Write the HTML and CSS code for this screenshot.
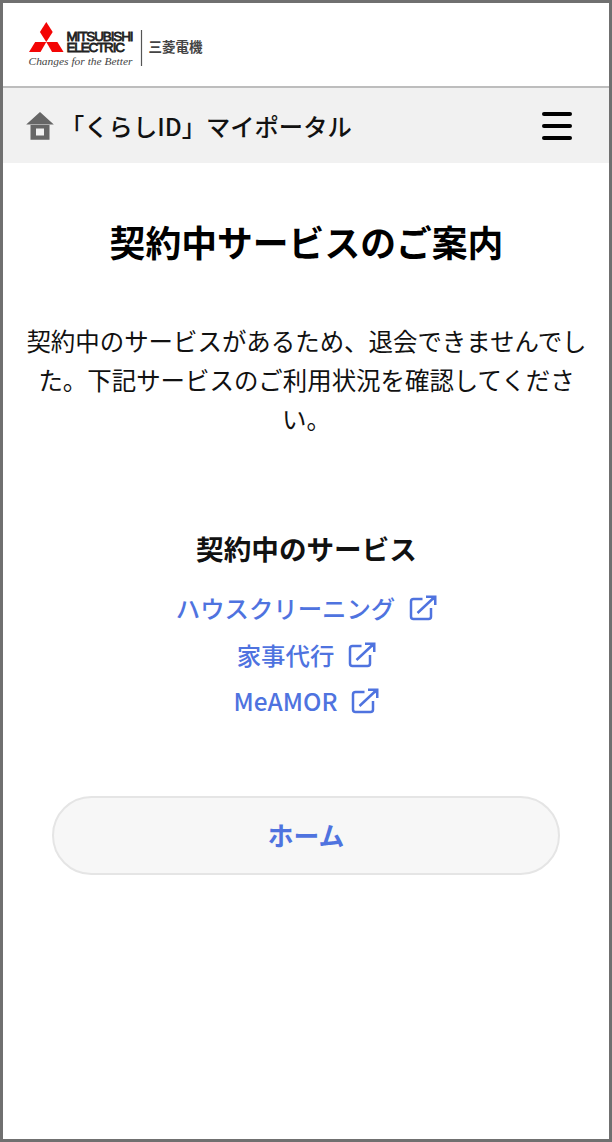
FILE: index.html
```html
<!DOCTYPE html>
<html lang="ja">
<head>
  <meta charset="UTF-8">
  <meta name="viewport" content="width=device-width, initial-scale=1.0">
  <title>契約中サービスのご案内</title>
  <link rel="stylesheet" href="styles.css">
</head>
<body>

  <header class="site-header">
    <a href="#" class="brand">
      <svg class="brand-logo" viewBox="0 0 176 48" role="img" aria-label="MITSUBISHI ELECTRIC 三菱電機">
        <g fill="#f30505">
          <path d="M18.300 1l6.400 10-6.400 10-6.400-10z"/>
          <path d="M7.200 21h11.100L12.500 31H1z"/>
          <path d="M18.300 21h11.100l6.200 10H24.100z"/>
        </g>
        <g class="brand-name">
          <text x="38.500" y="20" textLength="67" lengthAdjust="spacing">MITSUBISHI</text>
          <text x="38.500" y="31.300" textLength="58.500" lengthAdjust="spacing">ELECTRIC</text>
        </g>
        <text class="brand-slogan" x="0.500" y="43.500" textLength="104" lengthAdjust="spacingAndGlyphs">Changes for the Better</text>
        <path d="M113.500 9v36" stroke="#555" stroke-width="1.200"/>
        <text class="brand-jp" x="120.500" y="30.500" textLength="54" lengthAdjust="spacingAndGlyphs">三菱電機</text>
      </svg>
    </a>
  </header>

  <nav class="portal-bar">
    <a href="#" class="portal-home">
      <svg class="home-icon" viewBox="0 0 28 28" aria-hidden="true">
        <path fill="#666" fill-rule="evenodd" d="M14 0l13.800 12.500H.2zM4.500 12h19v15.800h-19zM10 16.500v7h8v-7z"/>
      </svg>
      <span>「くらしID」マイポータル</span>
    </a>
    <button class="menu-button" aria-label="メニュー">
      <span></span>
      <span></span>
      <span></span>
    </button>
  </nav>

  <main class="content">
    <h1>契約中サービスのご案内</h1>
    <p class="lead">契約中のサービスがあるため、退会できませんでした。下記サービスのご利用状況を確認してください。</p>

    <h2>契約中のサービス</h2>
    <ul class="service-list">
      <li>
        <a href="#">ハウスクリーニング
          <svg class="external-icon" viewBox="0 0 28 26" aria-hidden="true">
            <path d="M13.500 4H4.500Q2 4 2 6.500v15Q2 24 4.500 24h15Q22 24 22 21.500V13M8.500 18L24 3.500"/>
            <path class="arrow-head" d="M17 .5h10.500V10H25V5.500L22 3H17z"/>
          </svg>
        </a>
      </li>
      <li>
        <a href="#">家事代行
          <svg class="external-icon" viewBox="0 0 28 26" aria-hidden="true">
            <path d="M13.500 4H4.500Q2 4 2 6.500v15Q2 24 4.500 24h15Q22 24 22 21.500V13M8.500 18L24 3.500"/>
            <path class="arrow-head" d="M17 .5h10.500V10H25V5.500L22 3H17z"/>
          </svg>
        </a>
      </li>
      <li>
        <a href="#">MeAMOR
          <svg class="external-icon" viewBox="0 0 28 26" aria-hidden="true">
            <path d="M13.500 4H4.500Q2 4 2 6.500v15Q2 24 4.500 24h15Q22 24 22 21.500V13M8.500 18L24 3.500"/>
            <path class="arrow-head" d="M17 .5h10.500V10H25V5.500L22 3H17z"/>
          </svg>
        </a>
      </li>
    </ul>

    <a href="#" class="home-button">ホーム</a>
  </main>

</body>
</html>
```
FILE: styles.css
```css
:root {
  --link: #4f73df;
  --text: #111;
  --frame: #707070;
}

* {
  box-sizing: border-box;
}

body {
  margin: 0;
  min-height: 1142px;
  border: 3px solid var(--frame);
  background-color: #fff;
  color: var(--text);
  font-family: "Noto Sans CJK JP", sans-serif;
  font-size: 24.4px;
}

a {
  color: inherit;
  text-decoration: none;
}

/* Header */
.site-header {
  height: 85px;
  padding: 18px 25px 0;
  border-bottom: 2px solid #bdbdbd;
}

.brand-logo {
  display: block;
  width: 176px;
  height: 48px;
}

.brand-name {
  font-family: "Liberation Sans", sans-serif;
  font-size: 13.5px;
  fill: #222;
  stroke: #222;
  stroke-width: 0.8px;
}

.brand-slogan {
  font-family: "Liberation Serif", serif;
  font-size: 11px;
  font-style: italic;
  fill: #444;
}

.brand-jp {
  font-size: 13.5px;
  font-weight: 700;
  fill: #444;
}

/* Portal bar */
.portal-bar {
  display: flex;
  align-items: center;
  justify-content: space-between;
  height: 75px;
  padding: 0 37px 0 23px;
  background-color: #f1f1f1;
}

.portal-home {
  display: flex;
  align-items: center;
  font-size: 24.3px;
  font-weight: 500;
  line-height: 36px;
}

.home-icon {
  width: 28px;
  height: 28px;
  margin-right: 6px;
}

.menu-button {
  display: flex;
  flex-direction: column;
  justify-content: space-between;
  width: 30px;
  height: 28px;
  padding: 0;
  border: none;
  background: none;
}

.menu-button span {
  height: 4px;
  border-radius: 2px;
  background-color: #000;
}

/* Content */
.content {
  padding: 52px 21px 0 22px;
  text-align: center;
}

h1 {
  margin: 0 0 53px;
  font-size: 35.8px;
  font-weight: 700;
  line-height: 53px;
  color: #000;
}

.lead {
  margin: 0 -1px 89px;
  font-size: 24.45px;
  line-height: 39px;
}

h2 {
  margin: 0 0 18px;
  font-size: 27.6px;
  font-weight: 700;
  line-height: 42px;
}

.service-list {
  margin: 0 0 69px;
  padding: 0;
  list-style: none;
  color: var(--link);
  font-weight: 500;
}

.service-list li {
  height: 46.5px;
}

.service-list a {
  display: inline-flex;
  align-items: center;
  gap: 14px;
  line-height: 42px;
}

.external-icon {
  width: 28px;
  height: 26px;
  fill: none;
  stroke: currentColor;
  stroke-width: 2.5;
}

.arrow-head {
  fill: currentColor;
  stroke: none;
}

.home-button {
  display: block;
  margin: 0 28px 0 27px;
  height: 79px;
  border: 2px solid #e5e5e5;
  border-radius: 40px;
  background-color: #f7f7f7;
  color: var(--link);
  font-size: 25.8px;
  font-weight: 700;
  line-height: 73px;
}
```
